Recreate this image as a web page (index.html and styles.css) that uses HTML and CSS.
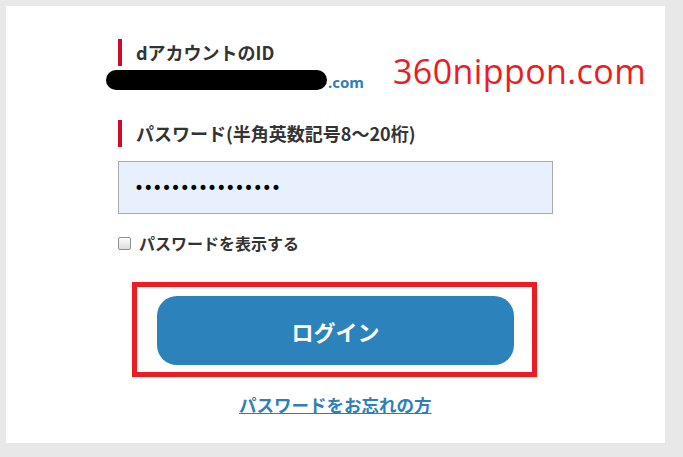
FILE: index.html
```html
<!DOCTYPE html>
<html lang="ja">
<head>
    <meta charset="UTF-8">
    <title>ログイン</title>
    <link rel="stylesheet" href="styles.css">
</head>
<body>

<div class="panel">
    <div class="watermark">360nippon.com</div>

    <div class="form">
        <div class="label">dアカウントのID</div>
        <div class="account">
            <span class="redacted"></span>
            <span class="domain">.com</span>
        </div>

        <div class="label label-pass">パスワード(半角英数記号8～20桁)</div>
        <div class="pass-input">
            <span class="dots">••••••••••••••••</span>
        </div>

        <label class="show-pass">
            <span class="checkbox"></span>
            パスワードを表示する
        </label>

        <div class="login-frame">
            <button class="login-btn">ログイン</button>
        </div>

        <a class="forgot" href="#">パスワードをお忘れの方</a>
    </div>
</div>

</body>
</html>
```

FILE: styles.css
```css
body {
    margin: 0;
    padding: 6px 18px 14px 6px;
    background-color: #e8e8e8;
    font-family: "Noto Sans CJK JP", "Noto Sans", sans-serif;
    color: #333333;
}

.panel {
    position: relative;
    width: 659px;
    height: 437px;
    background-color: #ffffff;
}

.watermark {
    position: absolute;
    left: 387px;
    top: 42px;
    font-family: "Open Sans", "Noto Sans", sans-serif;
    font-size: 34px;
    letter-spacing: 0.4px;
    color: #ec1c24;
}

.form {
    display: flex;
    flex-direction: column;
    align-items: flex-start;
    padding: 33px 0 0 112px;
}

.label {
    border-left: 4px solid #cf0a2c;
    padding-left: 14px;
    height: 27px;
    line-height: 27px;
    font-size: 18px;
    font-weight: bold;
    color: #333333;
}

.account {
    display: flex;
    align-items: flex-end;
    margin: 4px 0 0 -12px;
}

.redacted {
    display: block;
    width: 221px;
    height: 20px;
    border-radius: 10px;
    background-color: #000000;
}

.domain {
    font-family: "Noto Sans", sans-serif;
    font-size: 15px;
    font-weight: bold;
    color: #2e7fb8;
    line-height: 16px;
    margin-left: 1px;
}

.label-pass {
    margin-top: 30px;
}

.pass-input {
    box-sizing: border-box;
    width: 435px;
    height: 53px;
    margin-top: 14px;
    padding-left: 15px;
    background-color: #e8f0fe;
    border: 1px solid #aaaaaa;
    display: flex;
    align-items: center;
}

.dots {
    font-family: "DejaVu Sans", sans-serif;
    font-size: 17px;
    letter-spacing: -0.9px;
    color: #000000;
}

.show-pass {
    display: flex;
    align-items: center;
    gap: 8px;
    margin-top: 17px;
    font-size: 16px;
    font-weight: bold;
    color: #333333;
}

.checkbox {
    box-sizing: border-box;
    width: 13px;
    height: 13px;
    border: 1px solid #8f8f8f;
    border-radius: 2px;
    background: linear-gradient(#fdfdfd, #dcdcdc);
}

.login-frame {
    box-sizing: border-box;
    width: 405px;
    height: 95px;
    margin: 27px 0 0 14px;
    border: 5px solid #ed1c24;
    padding: 9px 0 0 20px;
}

.login-btn {
    display: block;
    width: 357px;
    height: 69px;
    border: none;
    border-radius: 20px;
    background-color: #2c82bb;
    color: #ffffff;
    font-family: "Noto Sans CJK JP", sans-serif;
    font-size: 22px;
    font-weight: bold;
}

.forgot {
    align-self: flex-start;
    margin: 15px 0 0 121px;
    font-size: 17.5px;
    font-weight: bold;
    color: #2e7fb8;
}
```
